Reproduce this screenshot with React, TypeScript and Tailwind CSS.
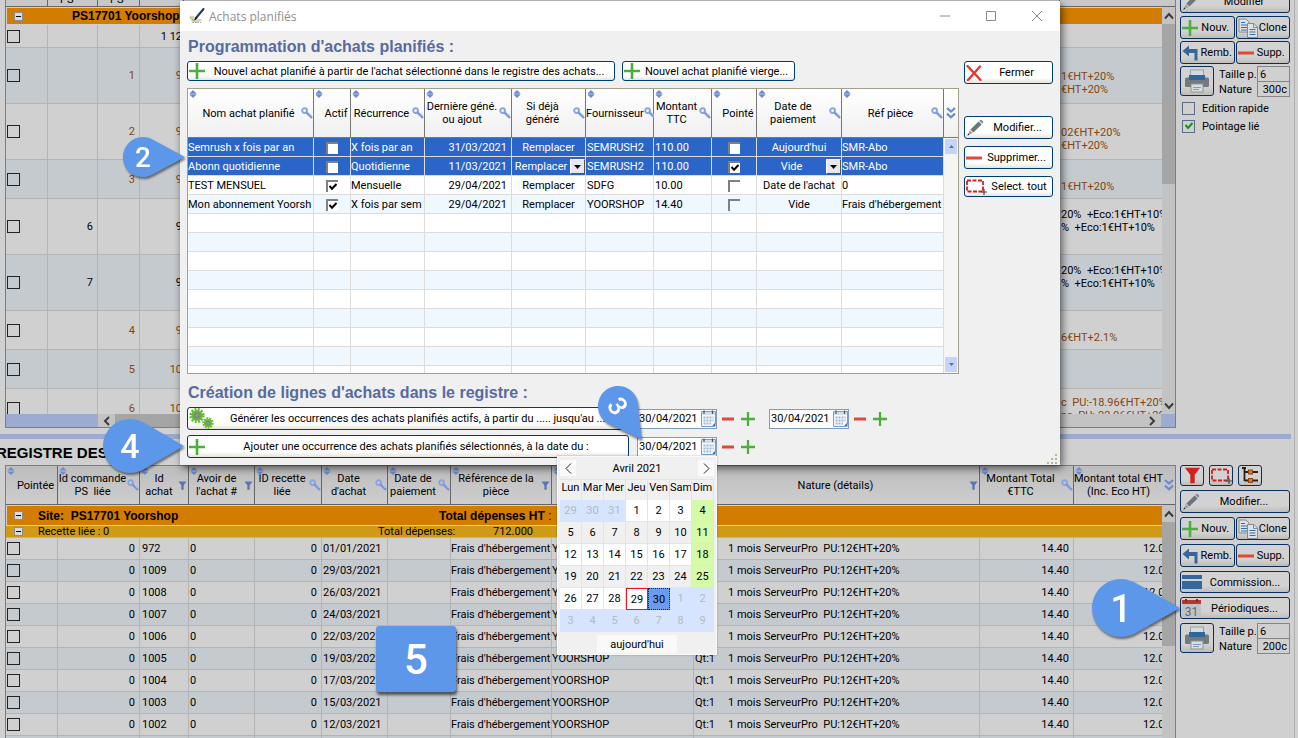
import React from "react";

type Sign = "key" | "funnel" | null;
type Column = { label: string; width?: number; sign: Sign; sort: boolean; indent?: boolean };

/* ---------- icons ---------- */

const SortIcon = () => (
  <svg className="absolute left-px top-px" width="8" height="8" viewBox="0 0 8 8">
    <path d="M4 0 L7.6 3.4 H0.4 Z M0.4 4.6 H7.6 L4 8 Z" fill="#6d8ad0" />
    <rect x="1" y="3" width="6" height="2" fill="#8ea5de" />
  </svg>
);

const KeyIcon = () => (
  <svg className="shrink-0" width="12" height="12" viewBox="0 0 12 12">
    <circle cx="3.6" cy="3.6" r="2.4" fill="none" stroke="#8aa3e2" strokeWidth="1.9" />
    <path d="M5.4 5.4 L11 11" stroke="#7b96dc" strokeWidth="2.4" />
    <path d="M8.6 7 L10.4 8.6" stroke="#a9bcec" strokeWidth="1.2" />
  </svg>
);

const FunnelIcon = ({ color, size }: { color: string; size: number }) => (
  <svg className="shrink-0" width={size} height={size} viewBox="0 0 10 10">
    <path d="M0.5 0.5 H9.5 L6.3 4.6 V9.6 H3.7 V4.6 Z" fill={color} />
  </svg>
);

const ChevronsIcon = () => (
  <svg width="10" height="12" viewBox="0 0 10 12">
    <path d="M1 1 L5 4.6 L9 1 M1 6.6 L5 10.2 L9 6.6" fill="none" stroke="#6d8ad0" strokeWidth="2.2" />
  </svg>
);

const PlusIcon = ({ size }: { size: number }) => (
  <svg className="shrink-0" width={size} height={size} viewBox="0 0 16 16">
    <path d="M8 0 V16 M0 8 H16" stroke="#4caf3c" strokeWidth="2.6" />
  </svg>
);

const MinusIcon = ({ width }: { width: number }) => (
  <svg className="shrink-0" width={width} height="4" viewBox="0 0 16 4" preserveAspectRatio="none">
    <rect x="0" y="0.5" width="16" height="3" fill="#dc4b38" />
  </svg>
);

const PenIcon = () => (
  <svg className="shrink-0" width="18" height="18" viewBox="0 0 18 18">
    <path d="M4.4 10.4 L12.6 2.4 L15.6 5.4 L7.4 13.4 Z" fill="#6c757c" />
    <path d="M13.2 1.8 L14.4 0.8 Q15.2 0.4 16 1.2 L17 2.2 Q17.6 3 17 3.8 L16.2 4.8 Z" fill="#868e94" />
    <path d="M3.8 11 L6.8 14 L1.4 16.6 Z" fill="#8fa5b8" />
    <path d="M1.4 16.6 L2.2 14.6 L3.4 15.7 Z" fill="#222" />
  </svg>
);

const CopyIcon = () => (
  <svg className="shrink-0" width="20" height="20" viewBox="0 0 20 20">
    <path d="M1 1 H8 L11 4 V14 H1 Z" fill="#dfe2e4" stroke="#858b90" />
    <path d="M3 4.5 H7 M3 7 H9 M3 9.5 H9 M3 12 H9" stroke="#3b6ea6" />
    <path d="M9.5 5.5 H16 L19.5 9 V19.5 H9.5 Z" fill="#dfe2e4" stroke="#858b90" />
    <path d="M15.5 5.5 V9.5 H19.5" fill="none" stroke="#858b90" />
    <path d="M11.5 11.5 H17.5 M11.5 14 H17.5 M11.5 16.5 H17.5" stroke="#3b6ea6" strokeWidth="1.2" />
  </svg>
);

const ReturnIcon = () => (
  <svg className="shrink-0" width="18" height="16" viewBox="0 0 18 16">
    <path d="M0.5 6 L7 0.5 V4 H15.5 V15.5 H12.5 V8 H7 V11.5 Z" fill="#34689c" />
  </svg>
);

const PrinterIcon = () => (
  <svg width="26" height="24" viewBox="0 0 26 24">
    <rect x="6.5" y="1" width="13" height="9" fill="#d5dade" stroke="#9aa1a6" />
    <path d="M1 10 Q1 8.5 2.5 8.5 H23.5 Q25 8.5 25 10 V16.5 Q25 18 23.5 18 H2.5 Q1 18 1 16.5 Z" fill="#74797d" />
    <rect x="5" y="6" width="16" height="5" fill="#2f669c" />
    <rect x="7" y="15" width="12" height="8" fill="#d8dde0" stroke="#8d949a" />
    <path d="M9 18.5 H17 M9 20.5 H15" stroke="#7b9fc0" />
  </svg>
);

const MarqueeIcon = () => (
  <svg className="shrink-0" width="21" height="16" viewBox="0 0 21 16">
    <rect x="1" y="1.5" width="16" height="11" fill="none" stroke="#d02020" strokeWidth="1.8" strokeDasharray="4 1.5" />
    <path d="M18 10 V16 M15 13 H21" stroke="#444" strokeWidth="1.2" />
  </svg>
);

const TreeIcon = () => (
  <svg width="18" height="17" viewBox="0 0 18 17">
    <path d="M1 1 H5 M3.5 1 V14 M3.5 5 H8 M3.5 13.5 H8 M12 5 H17 M12 13.5 H17" fill="none" stroke="#222" strokeWidth="1.8" />
    <rect x="7.5" y="3" width="4" height="4" fill="#d9772b" stroke="#8f4512" />
    <rect x="7.5" y="11.5" width="4" height="4" fill="#d9772b" stroke="#8f4512" />
  </svg>
);

const CardIcon = () => (
  <svg width="20" height="14" viewBox="0 0 20 14">
    <rect width="20" height="4" fill="#34689c" />
    <rect y="6" width="20" height="8" fill="#34689c" />
  </svg>
);

const Day31Icon = () => (
  <svg width="19" height="19" viewBox="0 0 19 19">
    <rect y="4" width="19" height="15" fill="#c0c3c5" />
    <rect y="1" width="19" height="4" fill="#b63a2c" />
    <path d="M4 0 V3 M15 0 V3" stroke="#8a2a20" strokeWidth="2" />
    <text x="9.5" y="16.5" textAnchor="middle" fontSize="12" fontFamily="Roboto, sans-serif" fill="#646b70">31</text>
  </svg>
);

const DateIcon = () => (
  <svg className="shrink-0" width="15" height="17" viewBox="0 0 15 17">
    <path d="M0.5 1.5 H14.5 V13 L11.5 16.5 H0.5 Z" fill="#f4f8fc" stroke="#6f9fc8" />
    <rect x="1" y="2" width="13" height="3" fill="#cfdfee" />
    <path d="M3 0.5 V4 M11.5 0.5 V4" stroke="#555" strokeWidth="1.2" />
    <path d="M2.5 7.5 H12.5 M2.5 10.5 H12.5 M2.5 13.5 H10" stroke="#a3b7d2" strokeWidth="2" strokeDasharray="2 1" />
    <path d="M14.5 12.5 L11 16.5 H14.5 Z" fill="#2f73a8" />
  </svg>
);

const GearsIcon = () => (
  <svg className="shrink-0" width="25" height="21" viewBox="0 0 25 21">
    <circle cx="8" cy="7.5" r="6.3" fill="none" stroke="#62c22e" strokeWidth="2.6" strokeDasharray="2 1.3" />
    <circle cx="8" cy="7.5" r="4.6" fill="#858585" stroke="#62c22e" strokeWidth="2" />
    <circle cx="8" cy="7.5" r="1.4" fill="#74b84e" />
    <circle cx="19" cy="15" r="4.6" fill="none" stroke="#62c22e" strokeWidth="2.2" strokeDasharray="1.8 1" />
    <circle cx="19" cy="15" r="3.2" fill="#858585" stroke="#62c22e" strokeWidth="1.6" />
    <circle cx="19" cy="15" r="1" fill="#74b84e" />
  </svg>
);

const CloseCrossIcon = () => (
  <svg width="16" height="16" viewBox="0 0 16 16">
    <path d="M1.5 1 L14.5 15 M14 1.5 L2 15" stroke="#e23a2e" strokeWidth="2.4" strokeLinecap="round" />
  </svg>
);

const FeatherIcon = () => (
  <svg width="16" height="16" viewBox="0 0 16 16">
    <path d="M0.5 9 Q3 6.5 5 8.5 L8 12 Q11 10 13.5 12.5 Q8 15.5 3 14 Z" fill="#d8d2b4" />
    <path d="M1 9.5 L4.5 12 M3.5 14.5 H12" stroke="#999" strokeDasharray="1.5 1" fill="none" />
    <path d="M14.5 1 L7 10" stroke="#1c3a5e" strokeWidth="2" strokeLinecap="round" />
    <path d="M7.5 9 L4.5 12.5 L6.5 12 L8.5 10 Z" fill="#111" />
  </svg>
);

const Arrow = ({ d }: { d: string }) => (
  <svg width="10" height="10" viewBox="0 0 10 10">
    <path d={d} fill="none" stroke="#3c3c3c" strokeWidth="2" />
  </svg>
);
const UP = "M1 7.5 L5 3 L9 7.5";
const DOWN = "M1 2.5 L5 7 L9 2.5";
const LEFT = "M7 1 L3 5 L7 9";
const RIGHT = "M3 1 L7 5 L3 9";

/* ---------- small controls ---------- */

const SquareCheck = ({ label }: { label: string }) => (
  <input
    type="checkbox"
    aria-label={label}
    className="block h-[13px] w-[13px] appearance-none border border-[#222] bg-transparent"
  />
);

const SunkenCheck = ({ label, on, wide }: { label: string; on: boolean; wide: boolean }) => (
  <span className="relative mx-auto block h-3 w-3">
    <input
      type="checkbox"
      aria-label={label}
      defaultChecked={on}
      className={
        "block h-3 w-3 appearance-none border-l-2 border-t-2 border-[#808080] " + (wide ? "bg-white" : "bg-transparent")
      }
    />
    {on && (
      <svg className="pointer-events-none absolute left-[3px] top-[3px]" width="8" height="8" viewBox="0 0 8 8">
        <path d="M0.5 3 L3 5.8 L7.5 1" fill="none" stroke="#000" strokeWidth="2" />
      </svg>
    )}
  </span>
);

const Collapse = () => (
  <button
    type="button"
    aria-label="Réduire"
    className="flex h-[9px] w-[9px] shrink-0 items-center justify-center border border-[#8d8d8d] bg-[#dadada]"
  >
    <span className="block h-px w-[5px] bg-black" />
  </button>
);

const DimButton = ({
  icon,
  children,
  className = "",
  label,
}: {
  icon: React.ReactNode;
  children?: React.ReactNode;
  className?: string;
  label?: string;
}) => (
  <button
    type="button"
    aria-label={label}
    className={
      "flex items-center overflow-hidden rounded-[3px] border border-[#082f5c] bg-linear-to-b from-[#d2d2d2] from-70% to-[#bebdb8] px-px " +
      className
    }
  >
    {icon}
    {children && <span className="flex-1 whitespace-nowrap text-center">{children}</span>}
  </button>
);

const LightButton = ({
  icon,
  children,
  className = "",
}: {
  icon: React.ReactNode;
  children: React.ReactNode;
  className?: string;
}) => (
  <button
    type="button"
    className={
      "flex items-center overflow-hidden rounded-[3px] border border-[#003c74] bg-linear-to-b from-white from-75% to-[#e6e4dc] px-px " +
      className
    }
  >
    {icon}
    <span className="flex-1 whitespace-nowrap text-center">{children}</span>
  </button>
);

const PrintBlock = ({ id, nature }: { id: string; nature: string }) => (
  <div className="flex">
    <button
      type="button"
      aria-label="Imprimer"
      className="flex h-[30px] w-[34px] items-center justify-center rounded-[3px] border border-[#082f5c] bg-linear-to-b from-[#d2d2d2] from-70% to-[#bebdb8]"
    >
      <PrinterIcon />
    </button>
    <div className="grid flex-1 grid-cols-[1fr_33px] items-center pl-[5px]">
      <label htmlFor={id + "-size"} className="whitespace-nowrap">Taille p.</label>
      <input id={id + "-size"} defaultValue="6" className="h-4 w-[33px] border border-[#858585] bg-transparent pl-0.5" />
      <label htmlFor={id + "-nature"}>Nature</label>
      <input
        id={id + "-nature"}
        defaultValue={nature}
        className="-mt-px h-4 w-[33px] border border-[#858585] bg-transparent pr-0.5 text-right"
      />
    </div>
  </div>
);

const HeaderCell = ({ col, className }: { col: Column; className: string }) => (
  <th scope="col" className={"relative border-r p-0 align-middle font-normal " + className}>
    {col.sort && <SortIcon />}
    <span className={"flex items-center " + (col.indent ? "pl-2" : "")}>
      <span className="flex-1 whitespace-pre text-center leading-[13px]">{col.label}</span>
      {col.sign === "key" && <KeyIcon />}
      {col.sign === "funnel" && (
        <span className="pr-px">
          <FunnelIcon color="#5a74b8" size={9} />
        </span>
      )}
    </span>
  </th>
);

const Columns = ({ cols }: { cols: Column[] }) => (
  <colgroup>
    {cols.map((c, i) => (
      <col key={i} style={c.width ? { width: c.width } : undefined} />
    ))}
  </colgroup>
);

/* ---------- data ---------- */

type OrderRow = { h: number; ps: string; id: string; total: string; lines: string[]; brown: boolean };
const orders: OrderRow[] = [
  { h: 23, ps: "", id: "", total: "1 12", lines: [], brown: false },
  { h: 56, ps: "", id: "1", total: "9", lines: ["", "1€HT+20%", "€HT+20%"], brown: true },
  { h: 56, ps: "", id: "2", total: "9", lines: ["", "02€HT+20%", "€HT+20%"], brown: true },
  { h: 39, ps: "", id: "3", total: "9", lines: ["", "1€HT+20%"], brown: true },
  { h: 56, ps: "6", id: "", total: "9", lines: ["20%  +Eco:1€HT+10%", "%  +Eco:1€HT+10%", ""], brown: false },
  { h: 56, ps: "7", id: "", total: "9", lines: ["20%  +Eco:1€HT+10%", "%  +Eco:1€HT+10%", ""], brown: false },
  { h: 39, ps: "", id: "4", total: "9", lines: ["", "6€HT+2.1%"], brown: true },
  { h: 39, ps: "", id: "5", total: "10", lines: [], brown: true },
  { h: 39, ps: "", id: "6", total: "10", lines: ["c  PU:-18.96€HT+20%", "ns  PU:-22.96€HT+20%"], brown: true },
];

const ledgerCols: Column[] = [
  { label: "Pointée", width: 52, sign: null, sort: true, indent: true },
  { label: "Id commande\nPS  liée", width: 82, sign: "key", sort: true },
  { label: "Id\nachat", width: 49, sign: "funnel", sort: true },
  { label: "Avoir de\nl'achat #", width: 66, sign: "funnel", sort: true },
  { label: "ID recette\nliée", width: 67, sign: "key", sort: true },
  { label: "Date\nd'achat", width: 66, sign: "key", sort: true },
  { label: "Date de\npaiement", width: 63, sign: "key", sort: true },
  { label: "Référence de la\npièce", width: 101, sign: "funnel", sort: true },
  { label: "", width: 142, sign: null, sort: true },
  { label: "Nature (détails)", sign: "funnel", sort: true, indent: true },
  { label: "Montant Total\n€TTC", width: 94, sign: "key", sort: true },
  { label: "Montant total €HT\n(Inc. Eco HT)", width: 88, sign: null, sort: true },
];

const ledger = [
  ["972", "01/01/2021"],
  ["1009", "29/03/2021"],
  ["1008", "26/03/2021"],
  ["1007", "24/03/2021"],
  ["1006", "22/03/2021"],
  ["1005", "19/03/2021"],
  ["1004", "17/03/2021"],
  ["1003", "15/03/2021"],
  ["1002", "12/03/2021"],
  ["", ""],
];

const planCols: Column[] = [
  { label: "Nom achat planifié", width: 126, sign: "key", sort: true, indent: true },
  { label: "Actif", width: 37, sign: null, sort: true, indent: true },
  { label: "Récurrence", width: 74, sign: "key", sort: true },
  { label: "Dernière géné.\nou ajout", width: 87, sign: "key", sort: true },
  { label: "Si déjà\ngénéré", width: 74, sign: "key", sort: true },
  { label: "Fournisseur", width: 68, sign: "key", sort: true },
  { label: "Montant\nTTC", width: 58, sign: "key", sort: true },
  { label: "Pointé", width: 45, sign: null, sort: true, indent: true },
  { label: "Date de\npaiement", width: 85, sign: "key", sort: true },
  { label: "Réf pièce", sign: "key", sort: true, indent: true },
];

type Plan = {
  name: string; active: boolean; freq: string; last: string; supplier: string; amount: string;
  ticked: boolean; pay: string; ref: string; selected: boolean; open: boolean;
};
const plans: Plan[] = [
  { name: "Semrush x fois par an", active: false, freq: "X fois par an", last: "31/03/2021", supplier: "SEMRUSH2", amount: "110.00", ticked: false, pay: "Aujourd'hui", ref: "SMR-Abo", selected: true, open: false },
  { name: "Abonn quotidienne", active: false, freq: "Quotidienne", last: "11/03/2021", supplier: "SEMRUSH2", amount: "110.00", ticked: true, pay: "Vide", ref: "SMR-Abo", selected: true, open: true },
  { name: "TEST MENSUEL", active: true, freq: "Mensuelle", last: "29/04/2021", supplier: "SDFG", amount: "10.00", ticked: false, pay: "Date de l'achat", ref: "0", selected: false, open: false },
  { name: "Mon abonnement Yoorshop", active: true, freq: "X fois par semaine", last: "29/04/2021", supplier: "YOORSHOP", amount: "14.40", ticked: false, pay: "Vide", ref: "Frais d'hébergement", selected: false, open: false },
];

/* ---------- upper table ---------- */

function Orders() {
  return (
    <div className="flex min-w-0 flex-1 flex-col border-b border-l border-r border-[#7d7d7d]">
      <div className="flex h-[414px] overflow-hidden">
        <div className="min-w-0 flex-1">
          <table className="w-full table-fixed border-separate border-spacing-0">
            <colgroup>
              <col className="w-[42px]" />
              <col className="w-[50px]" />
              <col className="w-[42px]" />
              <col className="w-[44px]" />
              <col />
              <col className="w-[102px]" />
            </colgroup>
            <thead>
              <tr>
                {["", "PS", "PS", "", "", ""].map((t, i) => (
                  <th
                    key={i}
                    className="h-[7px] border-b border-r border-[#666] bg-[#c8c8c8] p-0 text-left font-normal last:border-r-0"
                  >
                    <span className="flex h-1.5 items-end overflow-hidden pl-3 leading-[13px]">{t}</span>
                  </th>
                ))}
              </tr>
            </thead>
            <tbody>
              <tr>
                <td colSpan={6} className="h-[18px] border-b border-l border-t border-[#d0d0d0] bg-[#d27c00] p-0">
                  <div className="flex items-center pl-[7px]">
                    <Collapse />
                    <b className="pl-[49px] font-['Liberation_Sans',Arial,sans-serif] text-[12px] leading-[14px]">
                      PS17701 Yoorshop
                    </b>
                  </div>
                </td>
              </tr>
              {orders.map((r, i) => (
                <tr key={i} style={{ height: r.h }} className={i % 2 ? "bg-[#c5cacf]" : "bg-[#d0d0d0]"}>
                  <td className="border-b border-r border-[#b4b4b4] p-0 pl-px">
                    <SquareCheck label={"Commande " + (i + 1)} />
                  </td>
                  <td className="border-b border-r border-[#b4b4b4] p-0 pr-1 text-right">{r.ps}</td>
                  <td className="border-b border-r border-[#b4b4b4] p-0 pr-1 text-right text-[#85450f]">{r.id}</td>
                  <td className={"border-b border-[#b4b4b4] p-0 pr-0.5 text-right " + (r.brown ? "text-[#85450f]" : "")}>
                    {r.total}
                  </td>
                  <td className="border-b border-[#b4b4b4] p-0" />
                  <td className={"overflow-hidden border-b border-[#b4b4b4] p-0 pl-px pt-px " + (r.brown ? "text-[#85450f]" : "")}>
                    {r.lines.map((l, k) => (
                      <div key={k} className="h-[13px] whitespace-pre">{l}</div>
                    ))}
                  </td>
                </tr>
              ))}
            </tbody>
          </table>
        </div>
        <div className="flex w-[13px] flex-col items-center bg-[#c3c3c3]">
          <div className="h-[7px] w-full shrink-0 border-b border-[#666] bg-[#c8c8c8]" />
          <div className="flex h-[17px] shrink-0 items-center"><Arrow d={UP} /></div>
          <div className="h-40 w-full bg-[#a5a5a5]" />
          <div className="flex-1" />
          <div className="flex h-[17px] items-center"><Arrow d={DOWN} /></div>
        </div>
      </div>
      <div className="flex h-[13px] bg-[#c3c3c3]">
        <div className="w-[92px] bg-[#9eabd0]" />
        <div className="flex w-[17px] items-center justify-center"><Arrow d={LEFT} /></div>
        <div className="flex-1 bg-[#a5a5a5]" />
        <div className="flex w-[104px] items-center justify-end bg-[#c3c3c3] pr-1"><Arrow d={RIGHT} /></div>
        <div className="w-3.5 bg-[#9eabd0]" />
      </div>
    </div>
  );
}

/* ---------- lower table ---------- */

function Ledger() {
  const cell = "overflow-hidden whitespace-nowrap border-b border-r border-[#b4b4b4] p-0 ";
  return (
    <div className="flex min-w-0 flex-1 overflow-hidden border-l border-r border-t border-[#7d7d7d]">
      <div className="min-w-0 flex-1">
        <table className="w-full table-fixed border-separate border-spacing-0">
          <Columns cols={ledgerCols} />
          <thead>
            <tr className="h-[39px]">
              {ledgerCols.map((c, i) => (
                <HeaderCell
                  key={i}
                  col={c}
                  className="border-b border-[#666] bg-linear-to-b from-[#bdbdbd] to-[#cecece] last:border-r-0"
                />
              ))}
            </tr>
          </thead>
          <tbody>
            <tr>
              <td colSpan={12} className="h-[21px] border-b border-l border-t border-[#d0d0d0] bg-[#d27c00] p-0">
                <div className="flex items-center pl-[7px] font-['Liberation_Sans',Arial,sans-serif] text-[12px] font-bold leading-[14px]">
                  <Collapse />
                  <span className="w-[416px] whitespace-pre pl-[15px]">Site:  PS17701 Yoorshop</span>
                  <span>Total dépenses HT <span className="font-normal">:</span></span>
                </div>
              </td>
            </tr>
            <tr>
              <td colSpan={12} className="h-[12px] border-b border-[#b4b4b4] bg-[#d09a16] p-0">
                <div className="flex h-[11px] items-center overflow-hidden pl-2 leading-[11px]">
                  <Collapse />
                  <span className="w-[355px] pl-[15px]">Recette liée : 0</span>
                  <span className="w-[115px]">Total dépenses:</span>
                  <span>712.000</span>
                </div>
              </td>
            </tr>
            {ledger.map(([id, date], i) => (
              <tr key={i} className={"h-[22px] " + (i % 2 ? "bg-[#c5cacf]" : "bg-[#d0d0d0]")}>
                <td className={cell + "pl-px"}>{id && <SquareCheck label={"Achat " + id} />}</td>
                <td className={cell + "pr-1 text-right"}>{id && "0"}</td>
                <td className={cell + "pl-0.5"}>{id}</td>
                <td className={cell + "pl-px"}>{id && "0"}</td>
                <td className={cell + "pr-1 text-right"}>{id && "0"}</td>
                <td className={cell + "pl-px"}>{date}</td>
                <td className={cell} />
                <td className={cell}>{id && "Frais d'hébergement"}</td>
                <td className={cell}>{id && "YOORSHOP"}</td>
                <td className={cell + "pl-px"}>
                  {id && (
                    <span className="flex whitespace-pre">
                      <span className="w-[33px]">Qt:1</span>1 mois ServeurPro  PU:12€HT+20%
                    </span>
                  )}
                </td>
                <td className={cell + "pr-1 text-right"}>{id && "14.40"}</td>
                <td className="overflow-hidden whitespace-nowrap border-b border-[#b4b4b4] p-0 pl-[69px]">{id && "12.00"}</td>
              </tr>
            ))}
          </tbody>
        </table>
      </div>
      <div className="flex w-[13px] flex-col items-center bg-[#c3c3c3]">
        <div className="flex h-[39px] w-full items-center justify-center border-b border-[#666] bg-linear-to-b from-[#bdbdbd] to-[#cecece]">
          <ChevronsIcon />
        </div>
        <div className="flex h-[17px] items-center"><Arrow d={UP} /></div>
        <div className="h-[124px] w-full bg-[#a5a5a5]" />
      </div>
    </div>
  );
}

/* ---------- dialog ---------- */

const ComboArrow = () => (
  <button
    type="button"
    aria-label="Ouvrir la liste"
    className="flex h-[15px] w-[15px] shrink-0 items-center justify-center border border-b-[#555] border-l-white border-r-[#555] border-t-white bg-[#e9e9e9]"
  >
    <svg width="7" height="4" viewBox="0 0 7 4"><path d="M0 0 H7 L3.5 4 Z" fill="#000" /></svg>
  </button>
);

const ScrollTick = ({ down }: { down?: boolean }) => (
  <button type="button" aria-label={down ? "Descendre" : "Monter"} className="flex h-[15px] w-3 items-center justify-center bg-[#c6d3fb]">
    <svg width="5" height="3" viewBox="0 0 5 3">
      <path d={down ? "M0 0 H5 L2.5 3 Z" : "M0 3 H5 L2.5 0 Z"} fill="#66708c" />
    </svg>
  </button>
);

function Plans() {
  return (
    <div className="flex h-[286px] overflow-hidden border border-[#a3a08d] bg-white">
      <div className="min-w-0 flex-1">
        <table className="w-full table-fixed border-separate border-spacing-0">
          <Columns cols={planCols} />
          <thead>
            <tr className="h-[49px]">
              {planCols.map((c, i) => (
                <HeaderCell key={i} col={c} className="border-b border-[#777] bg-linear-to-b from-white to-[#f0f0f0]" />
              ))}
            </tr>
          </thead>
          <tbody>
            {plans.map((p, i) => {
              const cell =
                "overflow-hidden whitespace-nowrap border-b border-r border-[#dcdcdc] p-0 pt-px " +
                (p.selected ? "bg-[#2a65c7] text-white " : i % 2 ? "bg-[#f0f8ff] " : "bg-white ");
              return (
                <tr key={p.name} className="h-[19px]">
                  <td className={cell}><div className="mr-0.5 overflow-hidden">{p.name}</div></td>
                  <td className={cell}><SunkenCheck label={"Actif " + p.name} on={p.active} wide /></td>
                  <td className={cell}><div className="mr-0.5 overflow-hidden">{p.freq}</div></td>
                  <td className={cell + "pr-1 text-right"}>{p.last}</td>
                  <td className={cell}>
                    <div className="flex items-center">
                      <span className="flex-1 text-center">Remplacer</span>
                      {p.open && <ComboArrow />}
                    </div>
                  </td>
                  <td className={cell + "pl-px"}>{p.supplier}</td>
                  <td className={cell + "pl-px"}>{p.amount}</td>
                  <td className={cell}><SunkenCheck label={"Pointé " + p.name} on={p.ticked} wide={p.selected} /></td>
                  <td className={cell}>
                    <div className="flex items-center">
                      <span className="flex-1 text-center">{p.pay}</span>
                      {p.open && <ComboArrow />}
                    </div>
                  </td>
                  <td className={cell}>{p.ref}</td>
                </tr>
              );
            })}
            {[0, 1, 2, 3, 4, 5, 6, 7, 8].map((i) => (
              <tr key={i} className={"h-[19px] " + (i % 2 ? "bg-[#f0f8ff]" : "bg-white")}>
                {planCols.map((_, k) => (
                  <td key={k} className="border-b border-r border-[#dcdcdc] p-0" />
                ))}
              </tr>
            ))}
          </tbody>
        </table>
      </div>
      <div className="flex w-3.5 flex-col items-center bg-[#f5f5f3]">
        <div className="flex h-[49px] w-full items-center justify-center border-b border-[#777] bg-linear-to-b from-white to-[#f0f0f0]">
          <ChevronsIcon />
        </div>
        <div className="pt-px"><ScrollTick /></div>
        <div className="flex-1" />
        <div className="pb-px"><ScrollTick down /></div>
      </div>
    </div>
  );
}

const DateField = ({ label }: { label: string }) => (
  <div className="flex items-center gap-[7px]">
    <div className="flex h-5 w-20 items-center border border-[#7f9db9] bg-white pl-px">
      <input aria-label={label} defaultValue="30/04/2021" className="w-[62px] bg-transparent" />
      <DateIcon />
    </div>
    <button type="button" aria-label={label + " moins"} className="-ml-0.5 flex"><MinusIcon width={12} /></button>
    <button type="button" aria-label={label + " plus"} className="flex"><PlusIcon size={14} /></button>
  </div>
);

function PlanDialog() {
  return (
    <section
      role="dialog"
      aria-label="Achats planifiés"
      className="absolute left-[180px] right-[238px] top-px bg-[#f0f0f0] shadow-[2px_3px_8px_rgba(0,0,0,0.6)]"
    >
      <header className="flex h-[30px] items-center bg-white pl-[9px]">
        <FeatherIcon />
        <h1 className="flex-1 pl-1 font-['Open_Sans',sans-serif] text-[12px] text-[#8f8f8f]">Achats planifiés</h1>
        <div className="flex w-[129px] items-center justify-between pr-[9px]">
          {["M1 6 H11", "M1.5 1.5 H10.5 V10.5 H1.5 Z", "M1 1 L11 11 M11 1 L1 11"].map((d, i) => (
            <button key={i} type="button" aria-label={["Réduire", "Agrandir", "Fermer"][i]} className="w-7">
              <svg className="mx-auto" width="12" height="12" viewBox="0 0 12 12">
                <path d={d} fill="none" stroke="#8a8a8a" />
              </svg>
            </button>
          ))}
        </div>
      </header>
      <div className="flex">
        <div className="min-w-0 flex-1 pb-[7px] pl-[7px]">
          <h2 className="pl-px pt-1.5 font-['Liberation_Sans',Arial,sans-serif] text-[16px] font-bold leading-[19px] text-[#566b9f]">
            Programmation d'achats planifiés :
          </h2>
          <div className="flex gap-[7px] pt-[5px]">
            <LightButton className="h-5 w-[428px]" icon={<PlusIcon size={16} />}>
              Nouvel achat planifié à partir de l'achat sélectionné dans le registre des achats...
            </LightButton>
            <LightButton className="h-5 w-[173px]" icon={<PlusIcon size={16} />}>
              Nouvel achat planifié vierge...
            </LightButton>
          </div>
          <div className="pt-[7px]"><Plans /></div>
          <h2 className="pl-px pt-[9px] font-['Liberation_Sans',Arial,sans-serif] text-[16px] font-bold leading-[19px] text-[#566b9f]">
            Création de lignes d'achats dans le registre :
          </h2>
          <div className="flex items-center gap-2 pt-[5px]">
            <LightButton className="h-[23px] w-[442px]" icon={<GearsIcon />}>
              Générer les occurrences des achats planifiés actifs, à partir du ..... jusqu'au .....
            </LightButton>
            <div className="flex gap-3.5">
              <DateField label="Du" />
              <DateField label="Au" />
            </div>
          </div>
          <div className="flex items-center gap-2 pt-[5px]">
            <LightButton className="h-[23px] w-[442px]" icon={<PlusIcon size={16} />}>
              Ajouter une occurrence des achats planifiés sélectionnés, à la date du :
            </LightButton>
            <DateField label="Date" />
          </div>
        </div>
        <div className="flex w-[101px] flex-col pl-[5px] pr-[7px] pt-[30px]">
          <LightButton className="h-[23px]" icon={<CloseCrossIcon />}>Fermer</LightButton>
          <div className="flex flex-col gap-[7px] pt-8">
            <LightButton className="h-[23px]" icon={<PenIcon />}>Modifier...</LightButton>
            <LightButton className="h-[23px]" icon={<MinusIcon width={16} />}>Supprimer...</LightButton>
            <LightButton className="h-[21px]" icon={<MarqueeIcon />}>Select. tout</LightButton>
          </div>
          <svg className="-mr-1.5 ml-auto mt-auto" width="12" height="12" viewBox="0 0 12 12">
            <path d="M8 1 h2 v2 h-2z M4 5 h2 v2 h-2z M8 5 h2 v2 h-2z M0 9 h2 v2 h-2z M4 9 h2 v2 h-2z M8 9 h2 v2 h-2z" fill="#b9b59c" />
          </svg>
        </div>
      </div>
    </section>
  );
}

/* ---------- calendar ---------- */

function CalendarPopup() {
  const first = -2;
  const weeks = [0, 1, 2, 3, 4, 5];
  const days = ["Lun", "Mar", "Mer", "Jeu", "Ven", "Sam", "Dim"];
  return (
    <div className="absolute left-[557px] top-[456px] w-40 border border-[#fafafa] bg-[#f0f0f0] px-0.5 pb-px shadow-[0_0_2px_rgba(0,0,0,0.3)]">
      <div className="flex h-[22px] items-center justify-between">
        <button type="button" aria-label="Mois précédent" className="flex h-4 w-4 items-center justify-center bg-[#fafafa]">
          <svg width="7" height="11" viewBox="0 0 7 11"><path d="M6 0.5 L1 5.5 L6 10.5" fill="none" stroke="#222" /></svg>
        </button>
        <span>Avril 2021</span>
        <button type="button" aria-label="Mois suivant" className="flex h-4 w-4 items-center justify-center bg-[#fafafa]">
          <svg width="7" height="11" viewBox="0 0 7 11"><path d="M1 0.5 L6 5.5 L1 10.5" fill="none" stroke="#222" /></svg>
        </button>
      </div>
      <table className="w-[154px] table-fixed border-separate border-spacing-0 text-center">
        <thead>
          <tr className="h-[21px]">
            {days.map((d) => (
              <th key={d} className="overflow-hidden border-r border-t border-[#d6e5fd] p-0 pb-1.5 font-normal">{d}</th>
            ))}
          </tr>
        </thead>
        <tbody>
          {weeks.map((w) => (
            <tr key={w} className="h-[22px]">
              {days.map((_, d) => {
                const n = first + w * 7 + d;
                const out = n < 1 || n > 30;
                const shown = n < 1 ? 31 + n : n > 30 ? n - 30 : n;
                const tone = out
                  ? "border-b border-r border-[#d6e5fd] bg-[#d6e5fd] text-[#b3b9c3]"
                  : n === 29
                    ? "border border-[#f01414] bg-white"
                    : n === 30
                      ? "border border-dotted border-[#222] bg-[#6a9bee]"
                      : d === 6
                        ? "border-b border-r border-[#d6e5fd] bg-[#d5fba8]"
                        : w % 2
                          ? "border-b border-r border-[#d6e5fd] bg-[#f0f0f0]"
                          : "border-b border-r border-[#d6e5fd] bg-white";
                return <td key={d} className={"p-0 " + tone}>{shown}</td>;
              })}
            </tr>
          ))}
        </tbody>
      </table>
      <button type="button" className="mx-auto mt-[3px] block h-[18px] w-20 bg-[#f9f9f9]">aujourd'hui</button>
    </div>
  );
}

/* ---------- numbered markers ---------- */

type DropProps = { text: string; r: number; reach: number; size: number; angle?: number; className: string };
function Drop({ text, r, reach, size, angle = 0, className }: DropProps) {
  const box = 2 * (reach + 4);
  const t = Math.acos(r / reach);
  const x = r * Math.cos(t);
  const y = r * Math.sin(t);
  return (
    <svg
      className={"pointer-events-none absolute -translate-x-1/2 -translate-y-1/2 drop-shadow-[1px_2px_1px_rgba(0,0,0,0.5)] " + className}
      width={box}
      height={box}
      viewBox={`${-box / 2} ${-box / 2} ${box} ${box}`}
    >
      <g transform={`rotate(${angle})`}>
        <path d={`M ${reach} 0 L ${x} ${y} A ${r} ${r} 0 1 1 ${x} ${-y} Z`} fill="#5d97ea" />
        <text y={size * 0.36} textAnchor="middle" fontSize={size} fontWeight="500" fontFamily="Roboto, sans-serif" fill="#fff">
          {text}
        </text>
      </g>
    </svg>
  );
}

/* ---------- page ---------- */

export default function App() {
  return (
    <div className="relative flex h-screen overflow-hidden bg-[#d0d0d0] font-[Roboto,'Liberation_Sans',sans-serif] text-[11px] leading-[13px] text-black">
      <main className="flex min-w-0 flex-1 flex-col">
        <div className="flex pl-[5px]">
          <Orders />
          <aside className="flex w-[118px] flex-col gap-0.5 px-1">
            <DimButton className="-mt-2.5 h-[23px]" icon={<PenIcon />}>Modifier</DimButton>
            <div className="mt-px grid grid-cols-2 gap-x-px gap-y-0.5">
              <DimButton className="h-[23px]" icon={<PlusIcon size={16} />}>Nouv.</DimButton>
              <DimButton className="h-[23px]" icon={<CopyIcon />}>Clone</DimButton>
              <DimButton className="h-[23px]" icon={<ReturnIcon />}>Remb.</DimButton>
              <DimButton className="h-[23px]" icon={<MinusIcon width={16} />}>Supp.</DimButton>
            </div>
            <PrintBlock id="top" nature="300c" />
            <label className="flex h-[18px] items-center gap-[7px] pl-0.5">
              <input type="checkbox" className="h-[13px] w-[13px] appearance-none border border-[#5d6c85]" />
              Edition rapide
            </label>
            <label className="relative -mt-0.5 flex h-[18px] items-center gap-[7px] pl-0.5">
              <input type="checkbox" defaultChecked className="h-[13px] w-[13px] appearance-none border border-[#5d6c85]" />
              <svg className="pointer-events-none absolute left-[5px]" width="8" height="8" viewBox="0 0 8 8">
                <path d="M0.5 3 L3 6 L7.5 1" fill="none" stroke="#14951a" strokeWidth="2" />
              </svg>
              Pointage lié
            </label>
          </aside>
        </div>
        <div className="mr-[3px] mt-1.5 h-[5px] shrink-0 bg-[#9eabd0]" />
        <h2 className="-ml-1 h-[26px] shrink-0 font-['Liberation_Sans',Arial,sans-serif] text-[15px] font-bold leading-7">
          REGISTRE DES
        </h2>
        <div className="flex min-h-0 flex-1 pl-[5px]">
          <Ledger />
          <aside className="flex w-[118px] flex-col gap-1 px-1">
            <div className="flex gap-[5px]">
              <DimButton label="Filtrer" className="h-[21px] w-6 justify-center" icon={<FunnelIcon color="#d22020" size={17} />} />
              <DimButton label="Sélectionner" className="h-[21px] w-6 justify-center" icon={<MarqueeIcon />} />
              <DimButton label="Arborescence" className="h-[21px] w-6 justify-center" icon={<TreeIcon />} />
            </div>
            <DimButton className="h-[23px]" icon={<PenIcon />}>Modifier...</DimButton>
            <div className="grid grid-cols-2 gap-x-px gap-y-1">
              <DimButton className="h-[23px]" icon={<PlusIcon size={16} />}>Nouv.</DimButton>
              <DimButton className="h-[23px]" icon={<CopyIcon />}>Clone</DimButton>
              <DimButton className="h-[23px]" icon={<ReturnIcon />}>Remb.</DimButton>
              <DimButton className="h-[23px]" icon={<MinusIcon width={16} />}>Supp.</DimButton>
            </div>
            <DimButton className="h-[22px]" icon={<CardIcon />}>Commission...</DimButton>
            <DimButton className="h-[22px]" icon={<Day31Icon />}>Périodiques...</DimButton>
            <PrintBlock id="low" nature="200c" />
          </aside>
        </div>
      </main>
      <div className="w-1 border-l border-[#b0b0b0]" />

      <PlanDialog />
      <CalendarPopup />

      <Drop text="2" r={20} reach={42} size={28} className="left-[143px] top-[157px]" />
      <Drop text="3" r={20} reach={41} size={26} angle={55} className="left-[618px] top-[406px]" />
      <Drop text="4" r={27} reach={54} size={34} className="left-[130px] top-[446px]" />
      <Drop text="1" r={29} reach={59} size={38} className="left-[1121px] top-[608px]" />
      <div className="absolute left-[376px] top-[626px] flex h-[66px] w-20 items-center justify-center rounded-[3px] bg-[#5d97ea] font-[Roboto,sans-serif] text-[42px] font-medium text-white shadow-[1px_3px_3px_rgba(0,0,0,0.6)]">
        5
      </div>
    </div>
  );
}
